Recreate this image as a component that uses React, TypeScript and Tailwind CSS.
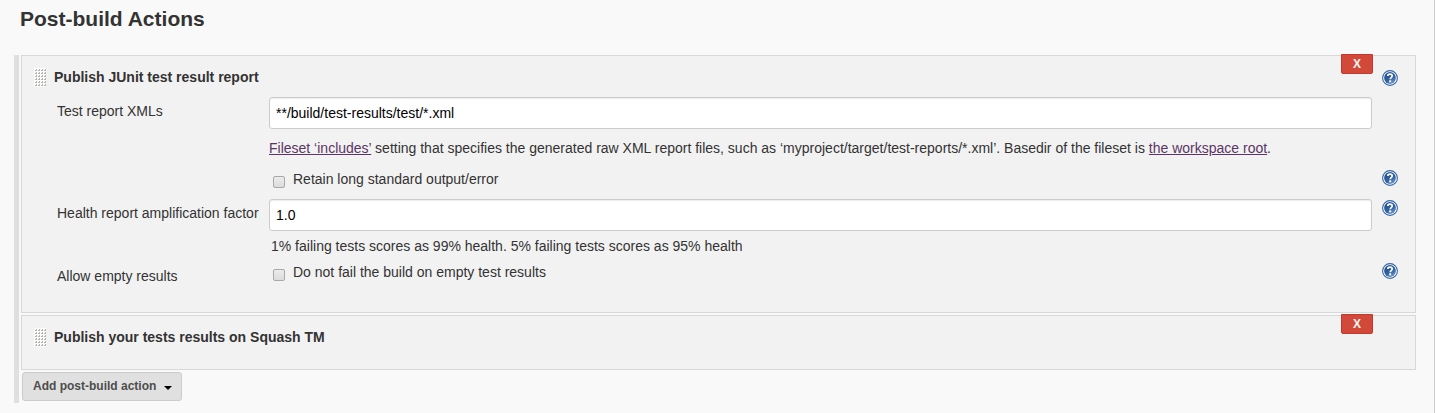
import React, { useId } from "react";

function HelpButton({ label }: { label: string }) {
  return (
    <button type="button" aria-label={label} className="block size-4 shrink-0">
      <svg viewBox="0 0 16 16" className="block size-4">
        <defs>
          <linearGradient id="help-fill" x1="0.2" y1="0" x2="0.8" y2="1">
            <stop offset="0" stopColor="#204a87" />
            <stop offset="0.6" stopColor="#3465a4" />
            <stop offset="1" stopColor="#7d9fcb" />
          </linearGradient>
        </defs>
        <circle cx="8" cy="8" r="7.4" fill="#ffffff" stroke="#3465a4" strokeWidth="1.1" />
        <circle cx="8" cy="8" r="5.9" fill="url(#help-fill)" />
        <path
          d="M5.8 6.1C5.8 4.8 6.700 4.200 8 4.200c1.300 0 2.200.7 2.200 1.800 0 1.500-2 1.700-2 3.300"
          fill="none"
          stroke="#ffffff"
          strokeWidth="1.7"
        />
        <rect x="7.2" y="10.3" width="2" height="2" fill="#ffffff" />
      </svg>
    </button>
  );
}

function Grip() {
  const dots = [];
  for (let row = 0; row < 6; row++) {
    for (let col = 0; col < 4; col++) {
      dots.push(
        <path
          key={`${row}-${col}`}
          d={`M${col * 3 + 1} ${row * 3 + 2}h1v-1h1v2h-2z`}
          fill="#b4b3ae"
        />,
      );
    }
  }
  return (
    <svg viewBox="0 0 12 19" className="h-[19px] w-3 shrink-0 cursor-move" shapeRendering="crispEdges" aria-hidden="true">
      <rect width="12" height="19" fill="#fcfcfc" />
      {dots}
    </svg>
  );
}

function Card({ title, help, children }: { title: string; help?: string; children?: React.ReactNode }) {
  return (
    <section className="relative border border-[#d8d8d8] bg-[#f2f2f2] pr-[17px]">
      <button
        type="button"
        aria-label={`Delete ${title}`}
        className="absolute -top-0.5 right-[42px] h-5 w-8 rounded-b-xs border border-[#c23a2d] bg-[#d24939] font-['Liberation_Sans',Arial,sans-serif] text-xs leading-4 font-bold text-[#f5f5f5]"
      >
        X
      </button>
      <header className="flex h-[41px] items-center pt-0.5 pl-3">
        <Grip />
        <h2 className="ml-2 flex-1 pb-px text-sm leading-5 font-bold">{title}</h2>
        {help && <HelpButton label={help} />}
      </header>
      {children}
    </section>
  );
}

function Row({ label, htmlFor, help, children }: { label?: string; htmlFor?: string; help?: string; children: React.ReactNode }) {
  return (
    <div className="flex items-start pl-[35px]">
      <div className="w-[212px] shrink-0 pt-1 leading-5 whitespace-nowrap">
        {label && <label htmlFor={htmlFor}>{label}</label>}
      </div>
      <div className="min-w-0 flex-1">{children}</div>
      <div className="ml-2.5 w-4 shrink-0 pt-px">{help && <HelpButton label={help} />}</div>
    </div>
  );
}

function TextField({ id, value }: { id: string; value: string }) {
  return (
    <input
      id={id}
      type="text"
      defaultValue={value}
      className="block h-8 w-full rounded-[3px] border border-[#cccccc] bg-white px-1.5 text-sm text-black shadow-[inset_0_1px_1px_#ededed] outline-none"
    />
  );
}

function CheckField({ id, label }: { id?: string; label: string }) {
  const generated = useId();
  const fieldId = id ?? generated;
  return (
    <div className="flex items-start pl-1">
      <input
        id={fieldId}
        type="checkbox"
        className="mt-[7px] size-3 shrink-0 appearance-none rounded-xs border border-[#a9a9a9] bg-linear-to-b from-[#ececec] to-[#dcdcdc] checked:bg-blue-600"
      />
      <label htmlFor={fieldId} className="ml-2 leading-5">
        {label}
      </label>
    </div>
  );
}

const linkClass = "text-[#5c3566] underline";

export default function App() {
  return (
    <main className="min-h-screen border-r border-[#cccccc] bg-[#f9f9f9] pr-[18px] pb-2.5 pl-3.5 font-['Liberation_Sans',Arial,sans-serif] text-sm text-[#333333]">
      <h1 className="h-[55px] pt-1 pl-1.5 text-[21px] leading-[30px] font-bold">Post-build Actions</h1>
      <div className="border-l-[5px] border-[#dfdfdf] pb-0.5 pl-0.5">
        <div className="flex flex-col gap-0.5">
          <Card title="Publish JUnit test result report" help="Help for Publish JUnit test result report">
            <div className="pb-[26px]">
              <Row label="Test report XMLs" htmlFor="xmls">
                <TextField id="xmls" value="**/build/test-results/test/*.xml" />
                <p className="py-[9px] leading-5">
                  <a href="#includes" className={linkClass}>Fileset ‘includes’</a> setting that specifies the generated raw XML
                  report files, such as ‘myproject/target/test-reports/*.xml’. Basedir of the fileset is{" "}
                  <a href="#workspace" className={linkClass}>the workspace root</a>.
                </p>
              </Row>
              <div className="pt-0.5 pb-2.5">
                <Row help="Help for Retain long standard output/error">
                  <CheckField label="Retain long standard output/error" />
                </Row>
              </div>
              <Row label="Health report amplification factor" htmlFor="health" help="Help for Health report amplification factor">
                <TextField id="health" value="1.0" />
                <p className="pt-[5px] pb-1 pl-0.5 leading-5">
                  1% failing tests scores as 99% health. 5% failing tests scores as 95% health
                </p>
              </Row>
              <div className="pt-0.5">
                <Row label="Allow empty results" htmlFor="empty" help="Help for Allow empty results">
                  <CheckField id="empty" label="Do not fail the build on empty test results" />
                </Row>
              </div>
            </div>
          </Card>
          <Card title="Publish your tests results on Squash TM">
            <div className="h-3" />
          </Card>
        </div>
        <button
          type="button"
          className="mt-0.5 ml-px flex h-[29px] items-center rounded-[3px] border border-[#cccccc] bg-[#e0e0e0] pr-[9px] pb-0.5 pl-2.5 text-xs leading-4 font-bold text-[#4d4d4d]"
        >
          Add post-build action
          <svg viewBox="0 0 8 4" className="mt-1 ml-2 h-1 w-2" aria-hidden="true">
            <path d="M0 0h8L4 4z" fill="#000000" />
          </svg>
        </button>
      </div>
    </main>
  );
}
